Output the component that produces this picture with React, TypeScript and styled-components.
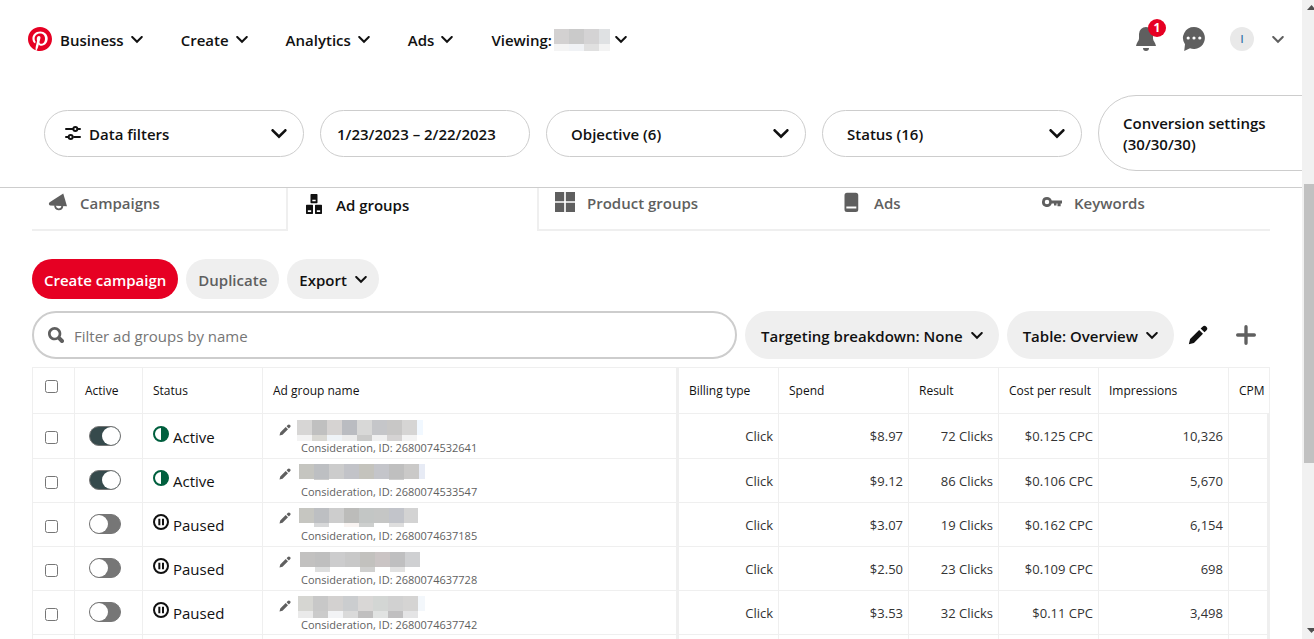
import React from "react";
import styled, { createGlobalStyle, css } from "styled-components";

const ink = "#111";
const muted = "#5f5f5f";
const line = "#efefef";
const outline = "#cdcdcd";

const GlobalStyle = createGlobalStyle`
  *, *::before, *::after { box-sizing: border-box; }
  body {
    margin: 0;
    background: #fff;
    color: ${ink};
    font-family: "Open Sans", "Noto Sans", sans-serif;
    font-size: 15px;
    line-height: 20px;
  }
  button, input { font: inherit; color: inherit; }
  button { border: 0; background: none; padding: 0; cursor: pointer; }
  a { color: inherit; text-decoration: none; }
`;

/* ---------- icons ---------- */

type IconProps = { size?: number; color?: string };

const Svg = styled.svg`
  display: block;
  flex: none;
`;

const makeIcon = (body: React.ReactNode) =>
  function Icon({ size = 20, color = "currentColor" }: IconProps) {
    return (
      <Svg width={size} height={size} viewBox="0 0 24 24" fill={color} aria-hidden="true">
        {body}
      </Svg>
    );
  };

const ChevronIcon = makeIcon(
  <path d="M20.16 6.65 12 14.71 3.84 6.65c-.78-.77-2.04-.77-2.82 0a1.955 1.955 0 0 0 0 2.79L12 20.3 22.98 9.44c.78-.78.78-2.02.02-2.79-.8-.77-2.06-.77-2.84 0" />
);
const LogoIcon = makeIcon(
  <path d="M0 12c0 5.123 3.211 9.497 7.73 11.218-.11-.937-.227-2.482.025-3.566.217-.932 1.401-5.938 1.401-5.938s-.357-.715-.357-1.774c0-1.66.962-2.9 2.161-2.9 1.02 0 1.512.765 1.512 1.682 0 1.025-.653 2.557-.99 3.978-.281 1.189.597 2.159 1.769 2.159 2.123 0 3.756-2.239 3.756-5.471 0-2.861-2.056-4.86-4.991-4.86-3.398 0-5.393 2.549-5.393 5.184 0 1.027.395 2.127.889 2.726a.36.36 0 0 1 .083.343c-.091.378-.293 1.189-.332 1.355-.053.218-.173.265-.4.159-1.492-.694-2.424-2.875-2.424-4.627 0-3.769 2.737-7.229 7.892-7.229 4.144 0 7.365 2.953 7.365 6.899 0 4.117-2.595 7.431-6.199 7.431-1.211 0-2.348-.63-2.738-1.373 0 0-.599 2.282-.744 2.84-.282 1.084-1.064 2.456-1.549 3.235C9.584 23.815 10.77 24 12 24c6.627 0 12-5.373 12-12S18.627 0 12 0 0 5.373 0 12" />
);
const BellIcon = makeIcon(
  <path d="M12 0a7 7 0 0 0-7 7v4.500c0 2.300-2.500 4.200-3 7.500h20c-.5-3.300-3-5.200-3-7.500V7a7 7 0 0 0-7-7zM9 21h6a3 3 0 0 1-6 0z" />
);
const ChatIcon = makeIcon(
  <path
    fillRule="evenodd"
    d="M12 0a11 11 0 0 0-9 17.300L2.200 24l5.800-2.700A11 11 0 1 0 12 0zM6.200 9.400a1.600 1.600 0 1 1 0 3.200 1.600 1.600 0 0 1 0-3.200zm5.800 0a1.600 1.600 0 1 1 0 3.200 1.600 1.600 0 0 1 0-3.200zm5.800 0a1.600 1.600 0 1 1 0 3.200 1.600 1.600 0 0 1 0-3.200z"
  />
);
const SlidersIcon = makeIcon(
  <g fill="none" stroke="currentColor" strokeWidth="3" strokeLinecap="round">
    <path d="M1.500 6h10M20 6h2.500M1.500 18h3M13.500 18h9" />
    <circle cx="15.500" cy="6" r="3" />
    <circle cx="8.500" cy="18" r="3" />
  </g>
);
const MegaphoneIcon = makeIcon(
  <>
    <path d="M18.300 1.800 2 12.400c-1.500 1-1.200 3.500.6 3.700L22.800 17.200z" />
    <path d="M8.500 16c0 6 8 6.500 8.800.8" fill="none" stroke="currentColor" strokeWidth="2.200" />
  </>
);
const BlocksIcon = makeIcon(
  <path
    fillRule="evenodd"
    d="M8.600 0h6.800q.8 0 .8.8v9.400q0 .8-.8.8H8.600q-.8 0-.8-.8V.8q0-.8.800-.8zM10 6.800v2h4v-2zM3.200 13h6.800q.8 0 .8.8v9.400q0 .8-.8.8H3.200q-.8 0-.8-.8v-9.400q0-.8.8-.8zM4.600 19.500v2h4v-2zM14 13h6.800q.8 0 .8.8v9.400q0 .8-.8.8H14q-.8 0-.8-.8v-9.400q0-.8.8-.8zM15.400 19.500v2h4v-2z"
  />
);
const GridIcon = makeIcon(<path d="M0 0h11v11H0zM13 0h11v11H13zM0 13h11v11H0zM13 13h11v11H13z" />);
const PinIcon = makeIcon(
  <path
    fillRule="evenodd"
    d="M6 1h10.500a3 3 0 0 1 3 3v17a3 3 0 0 1-3 3H6a3 3 0 0 1-3-3V4a3 3 0 0 1 3-3zM5.200 17.300v2.400h12v-2.400z"
  />
);
const KeyIcon = makeIcon(
  <path
    fillRule="evenodd"
    d="M6 6a6 6 0 0 1 5.700 4.300H24v3.600h-1.600v3.300h-3.800v-3.300h-1.200v2.200h-3v-2.200h-2.700A6 6 0 1 1 6 6zm0 3.300a2.700 2.700 0 1 0 0 5.400 2.700 2.700 0 0 0 0-5.400z"
  />
);
const SearchIcon = makeIcon(
  <path d="M10 16c-3.310 0-6-2.690-6-6s2.690-6 6-6 6 2.690 6 6-2.690 6-6 6m13.120 2.880-4.260-4.260A9.842 9.842 0 0 0 20 10c0-5.520-4.480-10-10-10S0 4.480 0 10s4.480 10 10 10c1.670 0 3.240-.41 4.620-1.140l4.260 4.260a3 3 0 0 0 4.240 0 3 3 0 0 0 0-4.240" />
);
const PencilIcon = makeIcon(
  <path d="M13.386 6.018l4.596 4.596L7.097 21.499 1 22.999l1.501-6.096L13.386 6.018zm8.662-4.066a3.248 3.248 0 0 1 0 4.596L19.750 8.848 15.154 4.250l2.298-2.299a3.248 3.248 0 0 1 4.596 0z" />
);
const PlusIcon = makeIcon(
  <path d="M22 10h-8V2a2 2 0 0 0-4 0v8H2a2 2 0 0 0 0 4h8v8a2 2 0 0 0 4 0v-8h8a2 2 0 0 0 0-4" />
);
const HalfIcon = makeIcon(
  <>
    <circle cx="12" cy="12" r="10.500" fill="none" stroke="currentColor" strokeWidth="3" />
    <path d="M12 1a11 11 0 0 1 0 22z" />
  </>
);
const PauseIcon = makeIcon(
  <>
    <circle cx="12" cy="12" r="10.500" fill="none" stroke="currentColor" strokeWidth="3" />
    <path d="M8 7h3v10H8zM13.500 7h3v10h-3z" />
  </>
);

/* Pixelated block that stands in for a private name. */
type MosaicProps = { top: string[]; bottom: string[]; width: number; height: number };

function Mosaic({ top, bottom, width, height }: MosaicProps) {
  return (
    <Svg width={width} height={height} aria-hidden="true" shapeRendering="crispEdges">
      {top.map((c, i) => (
        <rect key={"t" + i} x={i * 15} y={0} width={15} height={15} fill={c} />
      ))}
      {bottom.map((c, i) => (
        <rect key={"b" + i} x={i * 15} y={15} width={15} height={height - 15} fill={c} />
      ))}
    </Svg>
  );
}

/* ---------- frame ---------- */

const Shell = styled.div`
  display: flex;
  height: 100vh;
  overflow: hidden;
`;

const Page = styled.div`
  flex: 1;
  min-width: 0;
  overflow: hidden;
`;

const ScrollTrack = styled.div`
  flex: none;
  display: flex;
  flex-direction: column;
  width: 12px;
  padding: 5px 0 6px 2px;
  background: #f1f1f1;
  overflow: hidden;
`;

const ScrollSpace = styled.div<{ $grow: number }>`
  flex: ${(p) => p.$grow} 1 0;
`;

const ScrollThumb = styled(ScrollSpace)`
  background: #c1c1c1;
`;

const ScrollArrow = styled.svg`
  flex: none;
  display: block;
  margin-left: 3px;
`;

/* ---------- header ---------- */

const Label = styled.span`
  padding-top: 2px;
`;

const Header = styled.header`
  border-bottom: 1px solid ${outline};
`;

const TopBar = styled.div`
  display: flex;
  align-items: center;
  justify-content: space-between;
  height: 78px;
  padding: 0 18px 0 28px;
`;

const MainMenu = styled.nav`
  display: flex;
  align-items: center;
  gap: 38px;
`;

const MenuButton = styled.button`
  display: flex;
  align-items: center;
  gap: 7px;
  font-weight: 600;
  white-space: nowrap;
`;

const Viewing = styled.span`
  display: flex;
  align-items: center;
  gap: 2px;
  margin-right: -2px;
  svg { margin-top: 2px; }
`;

const Brand = styled.span`
  display: flex;
  align-items: center;
  gap: 8px;
`;

const Tools = styled.div`
  display: flex;
  align-items: center;
  color: ${muted};
`;

const ToolButton = styled.button`
  position: relative;
  display: flex;
  align-items: center;
  justify-content: center;
  width: 48px;
  height: 40px;
`;

const Badge = styled.span`
  position: absolute;
  top: 0;
  left: 26px;
  width: 18px;
  height: 18px;
  border-radius: 50%;
  background: #e60023;
  color: #fff;
  font-size: 12px;
  font-weight: 700;
  line-height: 18px;
  text-align: center;
`;

const Avatar = styled.span`
  width: 24px;
  height: 24px;
  border-radius: 50%;
  background: #e9e9e9;
  color: #2f6fa8;
  font-size: 10px;
  font-weight: 600;
  line-height: 24px;
  text-align: center;
`;

const AccountButton = styled(ToolButton)`
  width: 18px;
  justify-content: flex-end;
`;

const Filters = styled.div`
  display: flex;
  align-items: center;
  gap: 16px;
  padding: 17px 0 16px 44px;
  overflow: hidden;
`;

const FilterPill = styled.button<{ $kind?: "date" | "settings" }>`
  flex: none;
  display: flex;
  align-items: center;
  justify-content: space-between;
  width: 260px;
  height: 47px;
  padding: 0 16px 0 24px;
  border: 1px solid ${outline};
  border-radius: 38px;
  font-weight: 600;
  text-align: left;
  ${(p) => p.$kind === "date" && css`width: 210px; padding: 0 16px;`}
  ${(p) => p.$kind === "settings" && css`height: 76px; line-height: 21px;`}
`;

const PillLabel = styled.span`
  display: flex;
  align-items: center;
  gap: 8px;
  margin-left: -4px;
`;

/* ---------- tabs ---------- */

const Main = styled.main`
  padding: 0 32px;
`;

const Tabs = styled.nav`
  display: grid;
  grid-template-columns: 256fr 249fr 289fr 200fr 244fr;
`;

const Tab = styled.a<{ $active?: boolean; $divider?: "left" | "right" }>`
  display: flex;
  align-items: flex-start;
  gap: 12px;
  height: 43px;
  padding: ${(p) => (p.$active ? 6 : 4)}px 16px 0;
  border-bottom: 2px solid ${(p) => (p.$active ? "transparent" : line)};
  ${(p) => p.$divider === "left" && css`border-left: 2px solid ${line};`}
  ${(p) => p.$divider === "right" && css`border-right: 2px solid ${line};`}
  color: ${(p) => (p.$active ? ink : muted)};
  font-weight: 600;
`;

const TabLabel = styled.span`
  padding-top: 1px;
`;

/* ---------- toolbars ---------- */

const Toolbar = styled.div<{ $gapTop: number }>`
  display: flex;
  align-items: center;
  gap: 8px;
  margin-top: ${(p) => p.$gapTop}px;
`;

const Button = styled.button<{ $tone?: "primary" | "disabled"; $large?: boolean }>`
  flex: none;
  display: flex;
  align-items: center;
  gap: 8px;
  height: ${(p) => (p.$large ? 48 : 40)}px;
  padding: 0 ${(p) => (p.$large ? 16 : 12)}px;
  border-radius: 24px;
  background: ${(p) => (p.$tone === "primary" ? "#e60023" : line)};
  color: ${(p) => (p.$tone === "primary" ? "#fff" : p.$tone === "disabled" ? muted : ink)};
  font-weight: 600;
  white-space: nowrap;
`;

const SearchBox = styled.label`
  flex: 1;
  display: flex;
  align-items: center;
  gap: 10px;
  height: 48px;
  padding: 0 14px;
  border: 2px solid ${outline};
  border-radius: 24px;
  color: ${muted};
`;

const SearchInput = styled.input`
  flex: 1;
  min-width: 0;
  border: 0;
  padding: 2px 0 0;
  outline: 0;
  background: none;
  &::placeholder { color: #767676; opacity: 1; }
`;

const IconButtons = styled.div`
  display: flex;
  margin-left: -8px;
`;

const IconButton = styled.button`
  display: flex;
  align-items: center;
  justify-content: center;
  width: 48px;
  height: 48px;
`;

/* ---------- table ---------- */

const Table = styled.table`
  width: 100%;
  margin-top: 8px;
  table-layout: fixed;
  border-collapse: separate;
  border-spacing: 0;
`;

const Col = styled.col<{ $w?: number }>`
  width: ${(p) => (p.$w ? `${p.$w}px` : "auto")};
`;

const cell = css<{ $thick?: boolean }>`
  border-top: 1px solid ${line};
  border-left: ${(p) => (p.$thick ? 3 : 1)}px solid ${line};
  text-align: left;
  white-space: nowrap;
`;

const HeadCell = styled.th<{ $thick?: boolean }>`
  ${cell}
  height: 46px;
  padding: 0 0 0 10px;
  font-size: 12px;
  font-weight: 500;
  &:last-child { border-right: 1px solid ${line}; }
`;

const Cell = styled.td<{ $thick?: boolean; $number?: boolean }>`
  ${cell}
  height: 44px;
  padding: 0 0 2px 10px;
  tr:first-child > & { height: 45px; padding-bottom: 1px; }
  ${(p) => p.$number && css`
    padding: 1px 5px 0 0;
    text-align: right;
    font-size: 13px;
    color: #333;
  `}
  &:last-child { border-right: 3px solid ${line}; }
`;

const CheckCell = styled(Cell)`
  padding: 4px 0 0 12px;
`;

const CheckHead = styled(HeadCell)`
  padding: 0 0 8px 12px;
`;

const Check = styled.input`
  display: block;
  width: 13px;
  height: 13px;
  margin: 0;
`;

const Switch = styled.input`
  appearance: none;
  display: flex;
  width: 32px;
  height: 20px;
  margin: 0 0 0 4px;
  border: 1px solid #767676;
  border-radius: 10px;
  background: #767676;
  &::before {
    content: "";
    width: 18px;
    height: 18px;
    border-radius: 50%;
    background: #fff;
  }
  &:checked { background: #364a4c; justify-content: flex-end; }
`;

const Status = styled.span<{ $on: boolean }>`
  display: flex;
  gap: 4px;
  svg { margin-top: 1px; color: ${(p) => (p.$on ? "#005f3e" : ink)}; }
`;

const NameCell = styled.div`
  display: flex;
  gap: 6px;
  height: 40px;
  padding: 4px 0 0 6px;
`;

const EditButton = styled.button`
  display: flex;
  align-self: flex-start;
  padding-top: 4px;
  color: ${muted};
`;

const NameText = styled.div<{ $shift: number }>`
  display: flex;
  flex-direction: column;
  height: 35px;
  justify-content: space-between;
  svg { margin-left: ${(p) => p.$shift}px; }
`;

const Detail = styled.span`
  padding-left: 4px;
  color: ${muted};
  font-size: 11px;
  line-height: 14px;
`;

/* ---------- data ---------- */

type Row = {
  on: boolean;
  id: string;
  values: string[];
  shift: number;
  width: number;
  height: number;
  top: string[];
  bottom: string[];
};

const rows: Row[] = [
  {
    on: true, id: "2680074532641", values: ["Click", "$8.97", "72 Clicks", "$0.125 CPC", "10,326"],
    shift: 0, width: 126, height: 21,
    top: ["#d7d6d5", "#c0c0c0", "#d6d3d2", "#babcc1", "#d8d8d7", "#c5c6c9", "#c8c7c6", "#d6d5d4", "#f1f8ff"],
    bottom: ["#f3f3f3", "#d9d8d3", "#eff3f7", "#ececec", "#cacac9", "#f0f0f0", "#d5d3d3", "#f3f3f3"],
  },
  {
    on: true, id: "2680074533547", values: ["Click", "$9.12", "86 Clicks", "$0.106 CPC", "5,670"],
    shift: 2, width: 126, height: 16,
    top: ["#c5c5c0", "#bdbfc2", "#cccccc", "#c2c3c8", "#c4c3bd", "#c4c5ca", "#bfbfbf", "#cac9c8", "#e7ebf5"],
    bottom: ["#fff", "#cdcdcd", "#fff", "#fff", "#fff", "#fff", "#cfcfcf", "#fff"],
  },
  {
    on: false, id: "2680074637185", values: ["Click", "$3.07", "19 Clicks", "$0.162 CPC", "6,154"],
    shift: 2, width: 119, height: 19,
    top: ["#c6c6c1", "#bdbfc2", "#cdcdcd", "#bcbcba", "#c3c6c5", "#c5c6c5", "#c2c4ca", "#d3d3d3"],
    bottom: ["#fff", "#d7d8d9", "#fff", "#f8f3f1", "#cdcfce", "#fff", "#dedede", "#fff"],
  },
  {
    on: false, id: "2680074637728", values: ["Click", "$2.50", "23 Clicks", "$0.109 CPC", "698"],
    shift: 3, width: 120, height: 20,
    top: ["#c2c1c0", "#bfbfbf", "#cccccd", "#c8c8c8", "#c2c1be", "#cac4c4", "#bfbfc0", "#cfd0d2"],
    bottom: ["#fff", "#dedfdf", "#fff", "#fff", "#d0d0cf", "#fff", "#e2e2e2", "#fff"],
  },
  {
    on: false, id: "2680074637742", values: ["Click", "$3.53", "32 Clicks", "$0.11 CPC", "3,498"],
    shift: 1, width: 127, height: 22,
    top: ["#d6d6d2", "#c8c8c8", "#d3d1d0", "#cbcdcf", "#d9d7d6", "#d3d6d4", "#d1d1d1", "#d5d4d3", "#f3f7fb"],
    bottom: ["#eaeaea", "#cbcbcb", "#f2f3f5", "#dadada", "#c0bfbf", "#e1e3e2", "#c0bfc0", "#e4e4e5"],
  },
];

const widths = [42, 68, 120, undefined, 102, 130, 90, 100, 130, 42];
const heads = ["Active", "Status", "Ad group name", "Billing type", "Spend", "Result", "Cost per result", "Impressions", "CPM"];

export default function App() {
  return (
    <>
      <GlobalStyle />
      <Shell>
        <Page>
          <Header>
            <TopBar>
              <MainMenu aria-label="Main">
                <MenuButton>
                  <Brand><LogoIcon size={24} color="#e60023" /><Label>Business</Label></Brand>
                  <ChevronIcon size={12} />
                </MenuButton>
                <MenuButton><Label>Create</Label><ChevronIcon size={12} /></MenuButton>
                <MenuButton><Label>Analytics</Label><ChevronIcon size={12} /></MenuButton>
                <MenuButton><Label>Ads</Label><ChevronIcon size={12} /></MenuButton>
                <MenuButton>
                  <Viewing>
                    <Label>Viewing:</Label>
                    <Mosaic width={56} height={22} top={["#d3d1d1", "#cacaca", "#d4d3d4", "#dfe1e3"]} bottom={["#f4f4f4", "#f0f2f5", "#e0e0e0", "#f3f3f3"]} />
                  </Viewing>
                  <ChevronIcon size={12} />
                </MenuButton>
              </MainMenu>
              <Tools>
                <ToolButton aria-label="Notifications"><BellIcon size={24} /><Badge>1</Badge></ToolButton>
                <ToolButton aria-label="Messages"><ChatIcon size={24} /></ToolButton>
                <ToolButton aria-label="Profile"><Avatar>I</Avatar></ToolButton>
                <AccountButton aria-label="Accounts"><ChevronIcon size={12} /></AccountButton>
              </Tools>
            </TopBar>
            <Filters>
              <FilterPill><PillLabel><SlidersIcon size={16} /><Label>Data filters</Label></PillLabel><ChevronIcon size={16} /></FilterPill>
              <FilterPill $kind="date"><Label>1/23/2023 – 2/22/2023</Label></FilterPill>
              <FilterPill><Label>Objective (6)</Label><ChevronIcon size={16} /></FilterPill>
              <FilterPill><Label>Status (16)</Label><ChevronIcon size={16} /></FilterPill>
              <FilterPill $kind="settings"><Label>Conversion settings<br />(30/30/30)</Label></FilterPill>
            </Filters>
          </Header>

          <Main>
            <Tabs aria-label="Levels">
              <Tab href="#campaigns" $divider="right"><MegaphoneIcon /><TabLabel>Campaigns</TabLabel></Tab>
              <Tab href="#ad-groups" $active aria-current="page"><BlocksIcon /><TabLabel>Ad groups</TabLabel></Tab>
              <Tab href="#product-groups" $divider="left"><GridIcon /><TabLabel>Product groups</TabLabel></Tab>
              <Tab href="#ads"><PinIcon /><TabLabel>Ads</TabLabel></Tab>
              <Tab href="#keywords"><KeyIcon /><TabLabel>Keywords</TabLabel></Tab>
            </Tabs>

            <Toolbar $gapTop={28}>
              <Button $tone="primary"><Label>Create campaign</Label></Button>
              <Button $tone="disabled" disabled><Label>Duplicate</Label></Button>
              <Button><Label>Export</Label><ChevronIcon size={12} /></Button>
            </Toolbar>

            <Toolbar $gapTop={12}>
              <SearchBox>
                <SearchIcon size={16} />
                <SearchInput type="text" placeholder="Filter ad groups by name" aria-label="Filter ad groups by name" />
              </SearchBox>
              <Button $large><Label>Targeting breakdown: None</Label><ChevronIcon size={12} /></Button>
              <Button $large><Label>Table: Overview</Label><ChevronIcon size={12} /></Button>
              <IconButtons>
                <IconButton aria-label="Edit"><PencilIcon /></IconButton>
                <IconButton aria-label="Add"><PlusIcon color={muted} /></IconButton>
              </IconButtons>
            </Toolbar>

            <Table>
              <colgroup>
                {widths.map((w, i) => <Col key={i} $w={w} />)}
              </colgroup>
              <thead>
                <tr>
                  <CheckHead><Check type="checkbox" aria-label="Select all ad groups" /></CheckHead>
                  {heads.map((h) => <HeadCell key={h} $thick={h === "Billing type"}>{h}</HeadCell>)}
                </tr>
              </thead>
              <tbody>
                {rows.map((r) => (
                  <tr key={r.id}>
                    <CheckCell><Check type="checkbox" aria-label={`Select ${r.id}`} /></CheckCell>
                    <Cell><Switch type="checkbox" role="switch" defaultChecked={r.on} aria-label={`Active ${r.id}`} /></Cell>
                    <Cell>
                      <Status $on={r.on}>
                        {r.on ? <HalfIcon size={16} /> : <PauseIcon size={16} />}
                        <Label>{r.on ? "Active" : "Paused"}</Label>
                      </Status>
                    </Cell>
                    <Cell>
                      <NameCell>
                        <EditButton aria-label="Rename"><PencilIcon size={12} /></EditButton>
                        <NameText $shift={r.shift}>
                          <Mosaic top={r.top} bottom={r.bottom} width={r.width} height={r.height} />
                          <Detail>Consideration, ID: {r.id}</Detail>
                        </NameText>
                      </NameCell>
                    </Cell>
                    {r.values.map((v, i) => <Cell key={i} $number $thick={i === 0}>{v}</Cell>)}
                    <Cell $number />
                  </tr>
                ))}
                <tr>
                  {widths.map((_, i) => <Cell key={i} $thick={i === 4} />)}
                </tr>
              </tbody>
            </Table>
          </Main>
        </Page>

        <ScrollTrack aria-hidden="true">
          <ScrollArrow width="9" height="5"><path d="M0 5 4.500 0 9 5z" fill="#505050" /></ScrollArrow>
          <ScrollSpace $grow={174} />
          <ScrollThumb $grow={279} />
          <ScrollSpace $grow={165} />
          <ScrollArrow width="9" height="5"><path d="M0 0h9L4.500 5z" fill="#505050" /></ScrollArrow>
        </ScrollTrack>
      </Shell>
    </>
  );
}
